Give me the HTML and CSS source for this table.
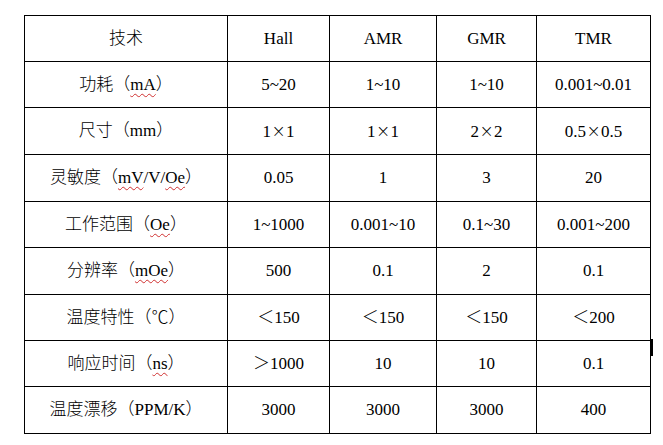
FILE: index.html
```html
<!DOCTYPE html>
<html lang="zh">
<head>
<meta charset="utf-8">
<link rel="stylesheet" href="styles.css">
</head>
<body>
<div class="page">
<table class="spec">
<colgroup>
<col class="c1"><col class="c2"><col class="c3"><col class="c4"><col class="c5">
</colgroup>
<tbody>
<tr class="h46"><td>技术</td><td>Hall</td><td>AMR</td><td>GMR</td><td>TMR</td></tr>
<tr class="h46"><td>功耗（<span class="sp">mA</span>）</td><td>5~20</td><td>1~10</td><td>1~10</td><td>0.001~0.01</td></tr>
<tr class="h47"><td>尺寸（mm）</td><td>1<span class="x">×</span>1</td><td>1<span class="x">×</span>1</td><td>2<span class="x">×</span>2</td><td>0.5<span class="x">×</span>0.5</td></tr>
<tr class="h47"><td>灵敏度（<span class="sp">mV</span>/V/<span class="sp">Oe</span>）</td><td>0.05</td><td>1</td><td>3</td><td>20</td></tr>
<tr class="h46"><td>工作范围（<span class="sp">Oe</span>）</td><td>1~1000</td><td>0.001~10</td><td>0.1~30</td><td>0.001~200</td></tr>
<tr class="h47"><td>分辨率（<span class="sp">mOe</span>）</td><td>500</td><td>0.1</td><td>2</td><td>0.1</td></tr>
<tr class="h46"><td>温度特性（℃）</td><td>＜150</td><td>＜150</td><td>＜150</td><td>＜200</td></tr>
<tr class="h46"><td>响应时间（<span class="sp">ns</span>）</td><td>＞1000</td><td>10</td><td>10</td><td>0.1</td></tr>
<tr class="h47"><td>温度漂移（<span class="lat">PPM/K</span>）</td><td>3000</td><td>3000</td><td>3000</td><td>400</td></tr>
</tbody>
</table>
<span class="caret"></span>
</div>
</body>
</html>
```
FILE: styles.css
```css
html, body {
  margin: 0;
  padding: 0;
  background: #ffffff;
}
.page {
  position: relative;
  padding: 15px 0 0 24px;
}
.spec {
  border-collapse: collapse;
  table-layout: fixed;
  width: 626px;
  font-family: "Liberation Serif", "Noto Sans CJK SC", serif;
  font-size: 17px;
  font-weight: 300;
  color: #000;
}
.c1 { width: 203px; }
.c2 { width: 102px; }
.c3 { width: 107px; }
.c4 { width: 100px; }
.c5 { width: 114px; }
.spec td {
  border: 1px solid #000;
  text-align: center;
  vertical-align: middle;
  padding: 0;
  line-height: 20px;
  white-space: nowrap;
}
.h46 { height: 46px; }
.h47 { height: 47px; }
.sp {
  text-decoration: underline wavy #d03030;
  text-decoration-thickness: 1px;
  text-underline-offset: 3px;
}
.lat {
  font-family: "Liberation Serif", serif;
}
.x {
  display: inline-block;
  width: 15px;
  text-align: center;
  font-family: "DejaVu Sans", sans-serif;
  font-weight: 200;
  font-size: 17px;
}
.caret {
  position: absolute;
  left: 651px;
  top: 339px;
  width: 2px;
  height: 17px;
  background: #000;
}
```
